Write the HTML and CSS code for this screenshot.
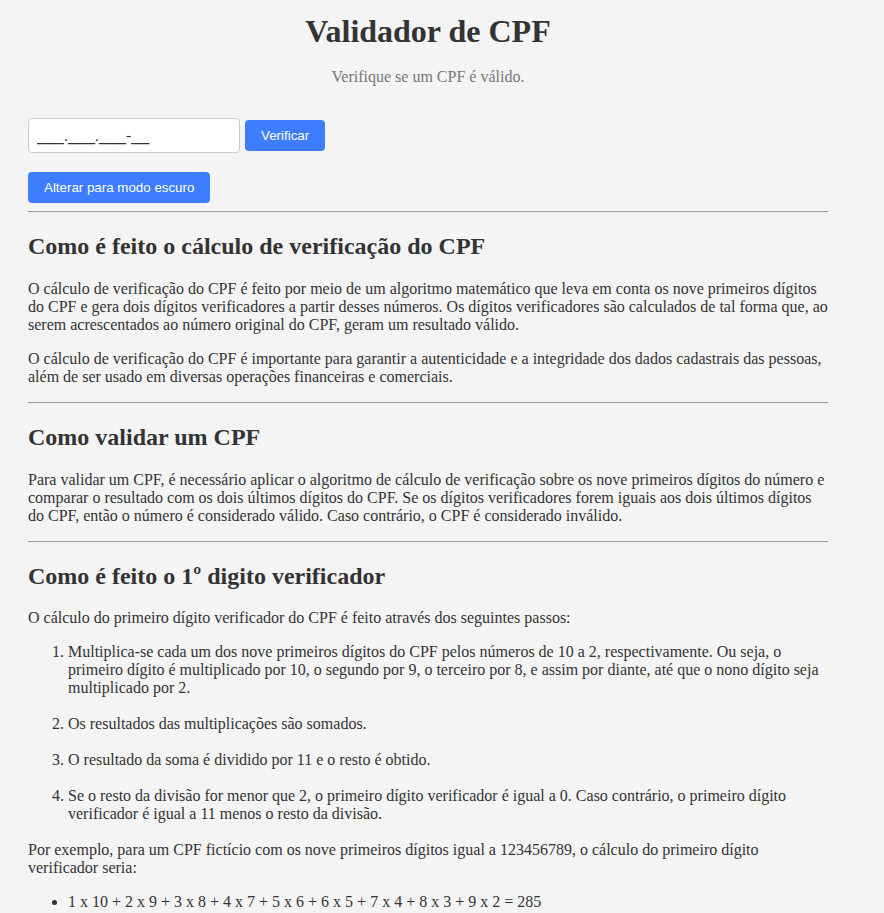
FILE: index.html
```html
<!DOCTYPE html>
<html lang="pt-BR">
<head>
<meta charset="utf-8">
<title>Validador de CPF</title>
<link rel="stylesheet" href="styles.css">
</head>
<body>
<div class="container">
  <header class="header">
    <h1 class="title">Validador de CPF</h1>
    <p class="subtitle">Verifique se um CPF é válido.</p>
  </header>

  <div class="form-row">
    <input class="cpf-input" type="text" placeholder="___.___.___-__">
    <button class="btn" type="button">Verificar</button>
  </div>
  <button class="btn theme-btn" type="button">Alterar para modo escuro</button>

  <hr class="divider">

  <section class="section">
    <h2 class="section-title">Como é feito o cálculo de verificação do CPF</h2>
    <p class="text">O cálculo de verificação do CPF é feito por meio de um algoritmo matemático que leva em conta os nove primeiros dígitos do CPF e gera dois dígitos verificadores a partir desses números. Os dígitos verificadores são calculados de tal forma que, ao serem acrescentados ao número original do CPF, geram um resultado válido.</p>
    <p class="text">O cálculo de verificação do CPF é importante para garantir a autenticidade e a integridade dos dados cadastrais das pessoas, além de ser usado em diversas operações financeiras e comerciais.</p>
  </section>

  <hr class="divider">

  <section class="section">
    <h2 class="section-title">Como validar um CPF</h2>
    <p class="text">Para validar um CPF, é necessário aplicar o algoritmo de cálculo de verificação sobre os nove primeiros dígitos do número e comparar o resultado com os dois últimos dígitos do CPF. Se os dígitos verificadores forem iguais aos dois últimos dígitos do CPF, então o número é considerado válido. Caso contrário, o CPF é considerado inválido.</p>
  </section>

  <hr class="divider">

  <section class="section">
    <h2 class="section-title">Como é feito o 1º digito verificador</h2>
    <p class="text">O cálculo do primeiro dígito verificador do CPF é feito através dos seguintes passos:</p>
    <ol class="steps">
      <li>Multiplica-se cada um dos nove primeiros dígitos do CPF pelos números de 10 a 2, respectivamente. Ou seja, o primeiro dígito é multiplicado por 10, o segundo por 9, o terceiro por 8, e assim por diante, até que o nono dígito seja multiplicado por 2.</li>
      <li>Os resultados das multiplicações são somados.</li>
      <li>O resultado da soma é dividido por 11 e o resto é obtido.</li>
      <li>Se o resto da divisão for menor que 2, o primeiro dígito verificador é igual a 0. Caso contrário, o primeiro dígito verificador é igual a 11 menos o resto da divisão.</li>
    </ol>
    <p class="text">Por exemplo, para um CPF fictício com os nove primeiros dígitos igual a 123456789, o cálculo do primeiro dígito verificador seria:</p>
    <ul class="example">
      <li>1 x 10 + 2 x 9 + 3 x 8 + 4 x 7 + 5 x 6 + 6 x 5 + 7 x 4 + 8 x 3 + 9 x 2 = 285</li>
    </ul>
  </section>
</div>
</body>
</html>
```
FILE: styles.css
```css
html {
  background: #f4f4f4;
}

body {
  margin: 0;
  padding: 0 28px;
  background: #f4f4f4;
  color: #333;
  font-family: "Liberation Serif", "Times New Roman", serif;
  font-size: 16px;
}

.container {
  max-width: 800px;
}

.header {
  text-align: center;
}

.title {
  margin: 13px 0 0;
  font-size: 32px;
  font-weight: bold;
  color: #333;
}

.subtitle {
  margin: 18px 0 0;
  color: #777;
}

.form-row {
  display: flex;
  align-items: center;
  gap: 5px;
  margin-top: 32px;
}

.cpf-input {
  box-sizing: border-box;
  width: 212px;
  height: 35px;
  padding: 0 8px;
  border: 1px solid #ccc;
  border-radius: 4px;
  background: #fff;
  font-family: "Liberation Sans", Arial, sans-serif;
  font-size: 16px;
  color: #222;
  outline: none;
}

.cpf-input::placeholder {
  color: #333;
  opacity: 1;
}

.btn {
  padding: 8px 16px;
  border: 0;
  border-radius: 4px;
  background: #3d7dff;
  color: #fff;
  font-family: "Liberation Sans", Arial, sans-serif;
  font-size: 13.333px;
  line-height: normal;
  cursor: pointer;
}

.theme-btn {
  display: block;
  margin-top: 19px;
}

.divider {
  height: 0;
  margin: 8px 0;
  border: 0;
  border-top: 1px solid #a0a0a0;
  border-bottom: 1px solid #ececec;
}

.section-title {
  margin: 19.92px 0;
  font-size: 24px;
  font-weight: bold;
  color: #333;
}

.text {
  margin: 16px 0;
}

.steps {
  margin: 16px 0;
  padding-left: 40px;
}

.steps li {
  margin-bottom: 18px;
}

.example {
  margin: 16px 0;
  padding-left: 40px;
}

.example li {
  margin-bottom: 18px;
}
```
